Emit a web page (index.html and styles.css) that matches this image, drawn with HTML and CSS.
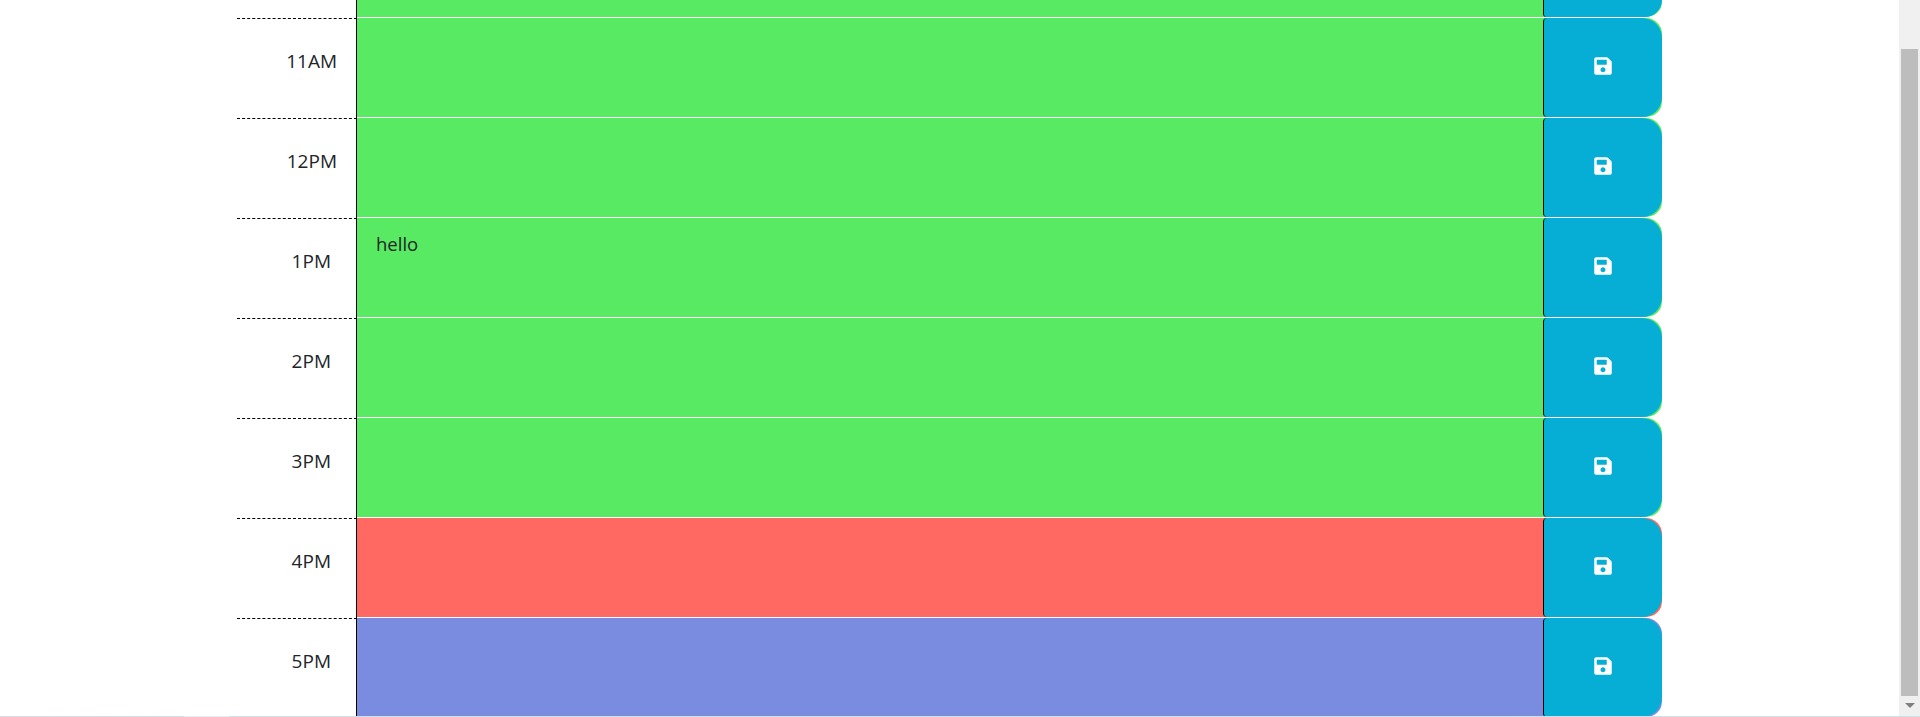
FILE: index.html
```html
<!DOCTYPE html>
<html lang="en">

<head>
  <meta charset="UTF-8" />
  <title>Work Day Scheduler</title>
  <link rel="stylesheet" href="styles.css">
</head>

<body>
  <svg class="icon-defs">
    <symbol id="save" viewBox="0 0 448 512">
      <path d="M433.9 129.9l-83.9-83.9A48 48 0 0 0 316.1 32H48C21.5 32 0 53.5 0 80v352c0 26.5 21.5 48 48 48h352c26.5 0 48-21.5 48-48V163.9a48 48 0 0 0-14.1-34zM224 416c-35.3 0-64-28.7-64-64 0-35.3 28.7-64 64-64s64 28.7 64 64c0 35.3-28.7 64-64 64zm96-304.5V212c0 6.6-5.4 12-12 12H76c-6.6 0-12-5.4-12-12V108c0-6.6 5.4-12 12-12h228.5c3.2 0 6.2 1.3 8.5 3.5l3.5 3.5c2.3 2.3 3.5 5.3 3.5 8.5z" />
    </symbol>
  </svg>
  <div class="page">
    <main class="container">
      <div class="time-block cut">
        <div class="hour"></div>
        <div class="description future"></div>
        <div class="save-cell future"><button class="save-btn"></button></div>
      </div>
      <div class="time-block">
        <div class="hour">11AM</div>
        <div class="description future"></div>
        <div class="save-cell future"><button class="save-btn"><svg><use href="#save"></use></svg></button></div>
      </div>
      <div class="time-block">
        <div class="hour">12PM</div>
        <div class="description future"></div>
        <div class="save-cell future"><button class="save-btn"><svg><use href="#save"></use></svg></button></div>
      </div>
      <div class="time-block">
        <div class="hour short">1PM</div>
        <div class="description future">hello</div>
        <div class="save-cell future"><button class="save-btn"><svg><use href="#save"></use></svg></button></div>
      </div>
      <div class="time-block">
        <div class="hour short">2PM</div>
        <div class="description future"></div>
        <div class="save-cell future"><button class="save-btn"><svg><use href="#save"></use></svg></button></div>
      </div>
      <div class="time-block">
        <div class="hour short">3PM</div>
        <div class="description future"></div>
        <div class="save-cell future"><button class="save-btn"><svg><use href="#save"></use></svg></button></div>
      </div>
      <div class="time-block">
        <div class="hour short">4PM</div>
        <div class="description present"></div>
        <div class="save-cell present"><button class="save-btn"><svg><use href="#save"></use></svg></button></div>
      </div>
      <div class="time-block">
        <div class="hour short">5PM</div>
        <div class="description past"></div>
        <div class="save-cell past"><button class="save-btn"><svg><use href="#save"></use></svg></button></div>
      </div>
    </main>
    <div class="scrollbar">
      <div class="thumb"></div>
      <div class="arrow-down"></div>
    </div>
  </div>
  <div class="window-edge"></div>
</body>

</html>
```

FILE: styles.css
```css
* {
  box-sizing: border-box;
  margin: 0;
  padding: 0;
}

html,
body {
  height: 717px;
  overflow: hidden;
}

body {
  background: white;
  color: #212529;
  font-family: 'Open Sans', sans-serif;
}

.icon-defs {
  display: none;
}

.page {
  display: flex;
  height: 716px;
  overflow: hidden;
}

.container {
  flex: 1;
  padding: 0 237px;
}

.time-block {
  display: flex;
  height: 100px;
}

.time-block.cut {
  height: 18px;
}

.hour {
  width: 120px;
  border-top: 1px dashed black;
  border-right: 1px solid black;
  padding: 29px 19px 0 0;
  text-align: right;
  font-size: 19px;
  line-height: 26px;
}

.hour.short {
  padding-right: 25px;
}

.cut .hour {
  border-top: none;
  padding: 0;
}

.description {
  flex: 1;
  border-bottom: 1px solid white;
  padding: 12px 19px;
  font-size: 18.5px;
  line-height: 27px;
}

.cut .description {
  padding: 0;
}

.save-cell {
  width: 119px;
  border-bottom: 1px solid white;
  border-radius: 0 16px 16px 0;
}

.cut .save-cell {
  border-radius: 0 0 16px 0;
}

.save-btn {
  display: flex;
  align-items: center;
  justify-content: center;
  width: 100%;
  height: 100%;
  background: #06aed5;
  border: none;
  border-left: 1px solid black;
  border-radius: 4px 20px 20px 4px;
}

.cut .save-btn {
  border-radius: 0 0 20px 4px;
}

.save-btn svg {
  width: 18px;
  height: 20px;
  margin: 0 1px 4px 0;
  fill: white;
}

.future {
  background: #57ea62;
}

.present {
  background: #ff6961;
}

.past {
  background: #7a8cdf;
}

.scrollbar {
  display: flex;
  flex-direction: column;
  align-items: center;
  flex: none;
  width: 21px;
  padding-top: 49px;
  background: #f0f0f0;
}

.thumb {
  width: 17px;
  height: 647px;
  background: #bdbdbd;
}

.arrow-down {
  width: 0;
  height: 0;
  margin-top: 7px;
  border-left: 5px solid transparent;
  border-right: 5px solid transparent;
  border-top: 5px solid #808080;
}

.window-edge {
  height: 1px;
  background: linear-gradient(to right, #dcd8e6 0, #cfdfe6 184px, #e6eff3 184px, #e6eff3 229px, #cfdfe6 229px, #cfe0e6 100%);
}
```
